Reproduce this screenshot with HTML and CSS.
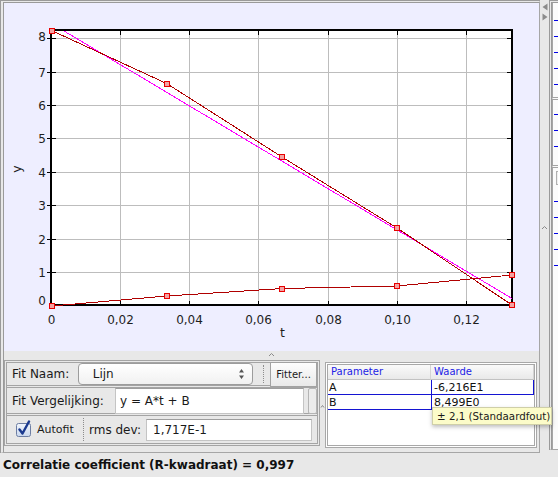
FILE: index.html
```html
<!DOCTYPE html>
<html lang="nl">
<head>
    <meta charset="UTF-8">
    <title>Fit</title>
    <link rel="stylesheet" href="styles.css">
</head>
<body>

<div class="window">
    <div class="top">
        <div class="frame">
            <div class="plot">
                <svg class="chart" width="535" height="348" viewBox="4 3 535 348">
                    <rect x="52" y="31" width="460" height="274" fill="#fff"/>
                    <g stroke="#bdbdbd" stroke-width="1">
                        <path d="M120.5 31V305M189.5 31V305M258.5 31V305M328.5 31V305M397.5 31V305M466.5 31V305"/>
                        <path d="M52 38.5H511M52 72.5H511M52 105.5H511M52 138.5H511M52 172.5H511M52 205.5H511M52 239.5H511M52 272.5H511"/>
                    </g>
                    <rect x="51" y="30" width="461" height="275" fill="none" stroke="#000" stroke-width="2"/>
                    <g stroke="#000" stroke-width="1">
                        <path d="M120.5 31V35M189.5 31V35M258.5 31V35M328.5 31V35M397.5 31V35M466.5 31V35"/>
                        <path d="M120.5 301V305M189.5 301V305M258.5 301V305M328.5 301V305M397.5 301V305M466.5 301V305"/>
                        <path d="M47 38.5H56M47 72.5H56M47 105.5H56M47 138.5H56M47 172.5H56M47 205.5H56M47 239.5H56M47 272.5H56"/>
                        <path d="M507 38.5H511M507 72.5H511M507 105.5H511M507 138.5H511M507 172.5H511M507 205.5H511M507 239.5H511M507 272.5H511"/>
                    </g>
                    <g class="ticks" text-anchor="end">
                        <text x="46" y="40.5">8</text>
                        <text x="46" y="76.5">7</text>
                        <text x="46" y="109.5">6</text>
                        <text x="46" y="142.5">5</text>
                        <text x="46" y="176.5">4</text>
                        <text x="46" y="209.5">3</text>
                        <text x="46" y="243.5">2</text>
                        <text x="46" y="276.5">1</text>
                        <text x="46" y="304.5">0</text>
                    </g>
                    <g class="ticks" text-anchor="middle">
                        <text x="51.5" y="324">0</text>
                        <text x="120.5" y="324">0,02</text>
                        <text x="189.5" y="324">0,04</text>
                        <text x="258.5" y="324">0,06</text>
                        <text x="328.5" y="324">0,08</text>
                        <text x="397.5" y="324">0,10</text>
                        <text x="466.5" y="324">0,12</text>
                    </g>
                    <text class="axis-title" x="282.5" y="337" text-anchor="middle">t</text>
                    <text class="axis-title" transform="translate(21,169) rotate(-90)" text-anchor="middle">y</text>

                    <polyline class="fit" points="64,31 512,298.5"/>
                    <polyline class="series" points="52,30.7 167,83.7 282,157 397,228 512,305"/>
                    <polyline class="series" points="52,306 167,296 282.5,288.5 397,286 512,275"/>
                    <g class="marker">
                        <rect x="49.5" y="28.5" width="5" height="5"/>
                        <rect x="164.5" y="81.5" width="5" height="5"/>
                        <rect x="279.5" y="154.5" width="5" height="5"/>
                        <rect x="394.5" y="225.5" width="5" height="5"/>
                        <rect x="509.5" y="302.5" width="5" height="5"/>
                        <rect x="49.5" y="303.5" width="5" height="5"/>
                        <rect x="164.5" y="293.5" width="5" height="5"/>
                        <rect x="279.5" y="286.5" width="5" height="5"/>
                        <rect x="394.5" y="283.5" width="5" height="5"/>
                        <rect x="509.5" y="272.5" width="5" height="5"/>
                    </g>
                </svg>
            </div>
            <div class="hsplit">
                <svg width="7" height="5" viewBox="0 0 7 5"><path d="M1 4L3.5 1.5L6 4" fill="none" stroke="#8a8a8a"/></svg>
            </div>
            <div class="controls">
                <div class="fit-panel">
                    <div class="row row-name">
                        <span class="label name-label">Fit Naam:</span>
                        <div class="combo">
                            <span>Lijn</span>
                            <svg width="7" height="12" viewBox="0 0 7 12"><path d="M3.5 1L6 4.5H1Z M3.5 11L6 7.5H1Z" fill="#555"/></svg>
                        </div>
                        <span class="sep"></span>
                        <button class="fitter">Fitter...</button>
                    </div>
                    <div class="row row-eq">
                        <span class="label eq-label">Fit Vergelijking:</span>
                        <div class="field eq-field">y = A*t + B</div>
                        <div class="stub"></div>
                    </div>
                    <div class="row row-auto">
                        <svg class="check" width="16" height="17" viewBox="0 0 16 17">
                            <defs>
                                <linearGradient id="cb" x1="0" y1="0" x2="0" y2="1">
                                    <stop offset="0" stop-color="#f2f6fc"/>
                                    <stop offset="1" stop-color="#c9d7ee"/>
                                </linearGradient>
                            </defs>
                            <rect x="0.5" y="3.5" width="14" height="13" rx="2" fill="url(#cb)" stroke="#6d7ea3"/>
                            <path d="M3.5 9.5L6.5 13.5L13 1.5" fill="none" stroke="#1b3a8f" stroke-width="2.4" stroke-linecap="round" stroke-linejoin="round"/>
                        </svg>
                        <span class="small-label">Autofit</span>
                        <span class="sep"></span>
                        <span class="label rms-label">rms dev:</span>
                        <div class="field rms-field">1,717E-1</div>
                    </div>
                </div>
                <div class="vgrip">
                    <svg width="5" height="5" viewBox="0 0 5 5"><path d="M1 3.5L2.5 1.5L4 3.5" fill="none" stroke="#8a8a8a"/></svg>
                </div>
                <div class="table-panel">
                    <div class="params">
                        <div class="head">Parameter</div>
                        <div class="head head-last">Waarde</div>
                        <div class="cell name">A</div>
                        <div class="cell value focus">-6,216E1</div>
                        <div class="cell name">B</div>
                        <div class="cell value edge">8,499E0</div>
                    </div>
                </div>
            </div>
        </div>
        <div class="vsplit">
            <svg width="8" height="20" viewBox="0 0 8 20"><path d="M1.5 5L6.5 1.5V8.5Z M6.5 15L1.5 11.5V18.5Z" fill="#8c8c8c"/></svg>
            <svg class="vsplit-grip" width="7" height="5" viewBox="0 0 7 5"><path d="M1 4L3.5 1.5L6 4" fill="none" stroke="#8a8a8a"/></svg>
        </div>
        <div class="side">
            <div class="side-sec sec-one">
                <div class="dash"></div><div class="dash"></div><div class="dash"></div><div class="dash"></div><div class="dash"></div>
            </div>
            <div class="side-sec sec-two">
                <div class="dash"></div><div class="dash"></div><div class="dash"></div>
            </div>
            <div class="side-sec sec-three">
                <div class="side-box"></div>
                <div class="dash"></div><div class="dash"></div><div class="dash"></div><div class="dash"></div><div class="dash"></div>
            </div>
        </div>
    </div>
    <div class="status">Correlatie coefficient (R-kwadraat) = 0,997</div>
    <div class="tooltip">± 2,1 (Standaardfout)</div>
</div>

</body>
</html>
```

FILE: styles.css
```css
* {
    box-sizing: border-box;
}
body {
    margin: 0;
    background: #e8e8e8;
    font-family: "DejaVu Sans", sans-serif;
    color: #1a1a1a;
}
.window {
    position: relative;
    width: 558px;
    height: 477px;
    overflow: hidden;
}
.top {
    display: flex;
    height: 453px;
}

/* left frame: plot + controls */
.frame {
    width: 540px;
    display: flex;
    flex-direction: column;
    border-left: 4px double #9a9a9a;
    border-top: 3px double #9a9a9a;
    border-right: 1px solid #a6a6a6;
    border-bottom: 1px solid #a6a6a6;
}
.plot {
    height: 348px;
    background: #eeeeff;
}
.chart {
    display: block;
}
.ticks text {
    font-size: 12px;
    fill: #1e1e1e;
}
.axis-title {
    font-size: 12.5px;
    fill: #1e1e1e;
}
.series {
    fill: none;
    stroke: #b00000;
    stroke-width: 1;
    shape-rendering: crispEdges;
}
.fit {
    fill: none;
    stroke: #ff00ff;
    stroke-width: 1;
    shape-rendering: crispEdges;
}
.marker rect {
    fill: #f3a3a3;
    stroke: #e80000;
    stroke-width: 1;
}
.hsplit {
    height: 7px;
    display: flex;
    justify-content: center;
    align-items: center;
}
.hsplit svg {
    display: block;
}

.controls {
    height: 94px;
    display: flex;
    align-items: flex-start;
    padding-top: 2px;
}
.fit-panel {
    width: 316px;
    border: 3px double #a4a4a4;
}
.row {
    display: flex;
    align-items: center;
    padding-left: 5px;
    border-bottom: 3px double #a4a4a4;
}
.row:last-child {
    border-bottom: none;
}
.row-name {
    height: 25px;
}
.row-eq {
    height: 28px;
}
.row-auto {
    height: 27px;
    padding-left: 9px;
}
.label {
    font-size: 12px;
    white-space: nowrap;
}
.name-label {
    width: 66px;
}
.eq-label {
    width: 103px;
}
.rms-label {
    width: 57px;
    margin-left: 5px;
}
.combo {
    width: 176px;
    height: 22px;
    display: flex;
    align-items: center;
    justify-content: space-between;
    padding: 0 7px 0 14px;
    font-size: 12px;
    border: 1px solid #9c9c9c;
    border-radius: 4px;
    background: linear-gradient(#ffffff, #f1f1f1);
}
.combo svg {
    display: block;
}
.sep {
    width: 0;
    align-self: stretch;
    margin: 2px 0;
    border-left: 1px dotted #8c8c8c;
}
.row-name .sep {
    margin-left: 10px;
}
.fitter {
    margin-left: 6px;
    width: 47px;
    height: 25px;
    padding: 0;
    font-family: "DejaVu Sans", sans-serif;
    font-size: 10px;
    color: #1a1a1a;
    border: 1px solid #a2a2a2;
    border-radius: 0;
    background: linear-gradient(#fdfdfd, #e9e9e9);
}
.field {
    height: 26px;
    display: flex;
    align-items: center;
    padding-left: 4px;
    font-size: 12px;
    background: #fff;
    border: 1px solid #c4c4c4;
    border-top-color: #9e9e9e;
}
.eq-field {
    width: 189px;
}
.stub {
    width: 9px;
    height: 26px;
    margin-left: 4px;
    border: 1px solid #b4b4b4;
    border-radius: 2px;
    background: #ececec;
}
.check {
    display: block;
    margin-top: -3px;
}
.small-label {
    width: 51px;
    padding-left: 5px;
    font-size: 11px;
}
.row-auto .sep {
    margin: 2px 0;
}
.rms-field {
    width: 166px;
    height: 22px;
    padding-left: 6px;
}
.vgrip {
    width: 5px;
    height: 92px;
    display: flex;
    align-items: center;
    justify-content: center;
}
.vgrip svg {
    display: block;
}
.table-panel {
    width: 212px;
    height: 86px;
    margin-top: 2px;
    border: 3px double #a8a8a8;
    background: #fff;
}
.params {
    display: grid;
    grid-template-columns: 103px 103px;
    grid-auto-rows: 15px;
}
.head {
    padding-left: 3px;
    font-size: 10px;
    line-height: 14px;
    color: #2222e6;
    background: linear-gradient(#fafafa, #e9e9e9);
    border-bottom: 1px solid #c2c2c2;
    border-right: 1px solid #d4d4d4;
}
.cell {
    font-size: 11px;
    line-height: 16px;
    color: #111;
}
.name {
    padding-left: 1px;
    border-bottom: 1px solid #1414d2;
}
.value {
    padding-left: 2px;
    border-left: 1px solid #1414d2;
}
.focus {
    border-right: 1px solid #1414d2;
    border-bottom: 1px solid #1414d2;
}

/* right splitter and side panel */
.vsplit {
    width: 9px;
    display: flex;
    flex-direction: column;
    align-items: center;
    padding-top: 2px;
}
.vsplit svg {
    display: block;
}
.vsplit-grip {
    margin-top: 203px;
}
.side {
    width: 9px;
    height: 450px;
    display: flex;
    flex-direction: column;
    border-left: 3px double #9a9a9a;
    border-top: 3px double #9a9a9a;
    border-bottom: 1px solid #a6a6a6;
    background: #e8e8e8;
}
.side-sec {
    border-left: 1px solid #a6a6a6;
    background: #fbfbfb;
}
.sec-one {
    height: 97px;
    padding-top: 17px;
    border-bottom: 3px double #a4a4a4;
}
.sec-two {
    height: 68px;
    padding-top: 14px;
    border-bottom: 3px double #a4a4a4;
}
.sec-three {
    flex: 1;
    padding-top: 3px;
}
.dash {
    width: 4px;
    height: 1px;
    margin: 0 0 15px 1px;
    background: #0000e6;
}
.side-box {
    height: 14px;
    margin: 0 0 16px 3px;
    border: 1px solid #b0b0b0;
    border-right: none;
    background: #f0f0f0;
}

.status {
    height: 24px;
    padding-left: 3px;
    font-size: 12px;
    font-weight: bold;
    line-height: 24px;
    color: #111;
    white-space: nowrap;
}
.tooltip {
    position: absolute;
    left: 432px;
    top: 407px;
    width: 120px;
    height: 18px;
    padding-left: 4px;
    font-size: 10.3px;
    line-height: 17px;
    white-space: nowrap;
    color: #1a1a1a;
    background: #fcfcc9;
    border: 1px solid #cfcfa8;
    box-shadow: 0 2px 4px rgba(0, 0, 0, 0.25);
}
```
